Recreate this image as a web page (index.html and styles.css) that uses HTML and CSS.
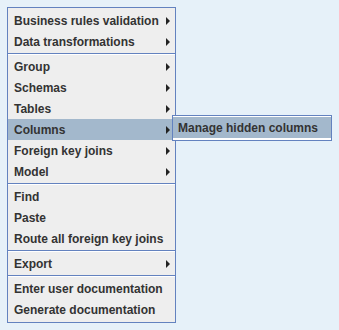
FILE: index.html
```html
<!DOCTYPE html>
<html lang="en">
<head>
    <meta charset="UTF-8">
    <title>Context menu</title>
    <link rel="stylesheet" href="styles.css">
</head>
<body>
    <div class="menu">
        <div class="item sub">Business rules validation</div>
        <div class="item sub">Data transformations</div>
        <div class="sep"></div>
        <div class="item sub">Group</div>
        <div class="item sub">Schemas</div>
        <div class="item sub">Tables</div>
        <div class="item sub active">Columns
            <!-- submenu opened on Columns -->
            <div class="submenu">
                <div class="item active">Manage hidden columns</div>
            </div>
        </div>
        <div class="item sub">Foreign key joins</div>
        <div class="item sub">Model</div>
        <div class="sep"></div>
        <div class="item">Find</div>
        <div class="item">Paste</div>
        <div class="item">Route all foreign key joins</div>
        <div class="sep"></div>
        <div class="item sub">Export</div>
        <div class="sep"></div>
        <div class="item">Enter user documentation</div>
        <div class="item">Generate documentation</div>
    </div>
</body>
</html>
```
FILE: styles.css
```css
body {
    margin: 0;
    background: #e6f1f9;
    font-family: "Liberation Sans", Arial, sans-serif;
    font-size: 12px;
    font-weight: bold;
    color: #333333;
}

/* Popup principal */
.menu {
    position: relative;
    margin: 7px 0 0 7px;
    width: 167px;
    padding: 2px 0;
    background: #eeeeee;
    border: 1px solid #6382bf;
    display: flex;
    flex-direction: column;
}

.item {
    position: relative;
    height: 21px;
    line-height: 23px;
    padding-left: 6px;
    white-space: nowrap;
}

.item.active {
    background: #a3b8cc;
}

/* Flecha de submenu */
.sub::after {
    content: "";
    position: absolute;
    left: 158px;
    top: 7px;
    border-top: 4px solid transparent;
    border-bottom: 4px solid transparent;
    border-left: 4px solid #222222;
}

.sep {
    height: 1px;
    margin: 1px 0 1px 0;
    background: #6382bf;
    border-bottom: 1px solid #ffffff;
}

/* Submenu */
.submenu {
    position: absolute;
    left: 164px;
    top: -4px;
    width: 158px;
    padding: 1px 0 2px 0;
    background: #ffffff;
    border: 1px solid #6382bf;
    display: flex;
    flex-direction: column;
}

.submenu .item {
    padding-left: 5px;
}
```
